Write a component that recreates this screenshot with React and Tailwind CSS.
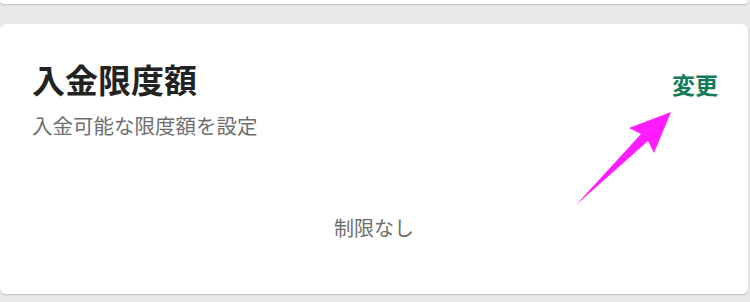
import React from "react";

export default function App() {
  return (
    <div
      className="relative w-[750px] h-[302px] overflow-hidden bg-[#e9e9e9]"
      style={{ fontFamily: '"Noto Sans CJK JP", "Noto Sans", sans-serif' }}
    >
      <div className="h-[4px] w-[748px] bg-white rounded-b-md shadow-[0_1px_2px_rgba(0,0,0,0.18)]" />
      <div className="mt-[20px] w-[748px] h-[270px] bg-white rounded-md shadow-[0_1px_2px_rgba(0,0,0,0.18)] pt-[35px] pl-[32px] pr-[30px] flex flex-col">
        <div className="flex justify-between items-start">
          <div className="flex flex-col">
            <div className="text-[33px] leading-[40px] font-bold text-[#222]">入金限度額</div>
            <div className="mt-[12px] text-[20.5px] leading-[28px] text-[#6e6e6e]">入金可能な限度額を設定</div>
          </div>
          <div className="mt-[9px] text-[23px] leading-[32px] font-bold text-[#137b58]">変更</div>
        </div>
        <div className="mt-[75px] text-center text-[20px] leading-[28px] text-[#6e6e6e] -ml-[32px] -mr-[30px]">制限なし</div>
      </div>
      <svg className="absolute left-0 top-0" width="750" height="302" viewBox="0 0 750 302">
        <polygon
          points="576,205 641,134 629,128 671,112 654,153 648,141"
          fill="#ff1cff"
        />
      </svg>
    </div>
  );
}
